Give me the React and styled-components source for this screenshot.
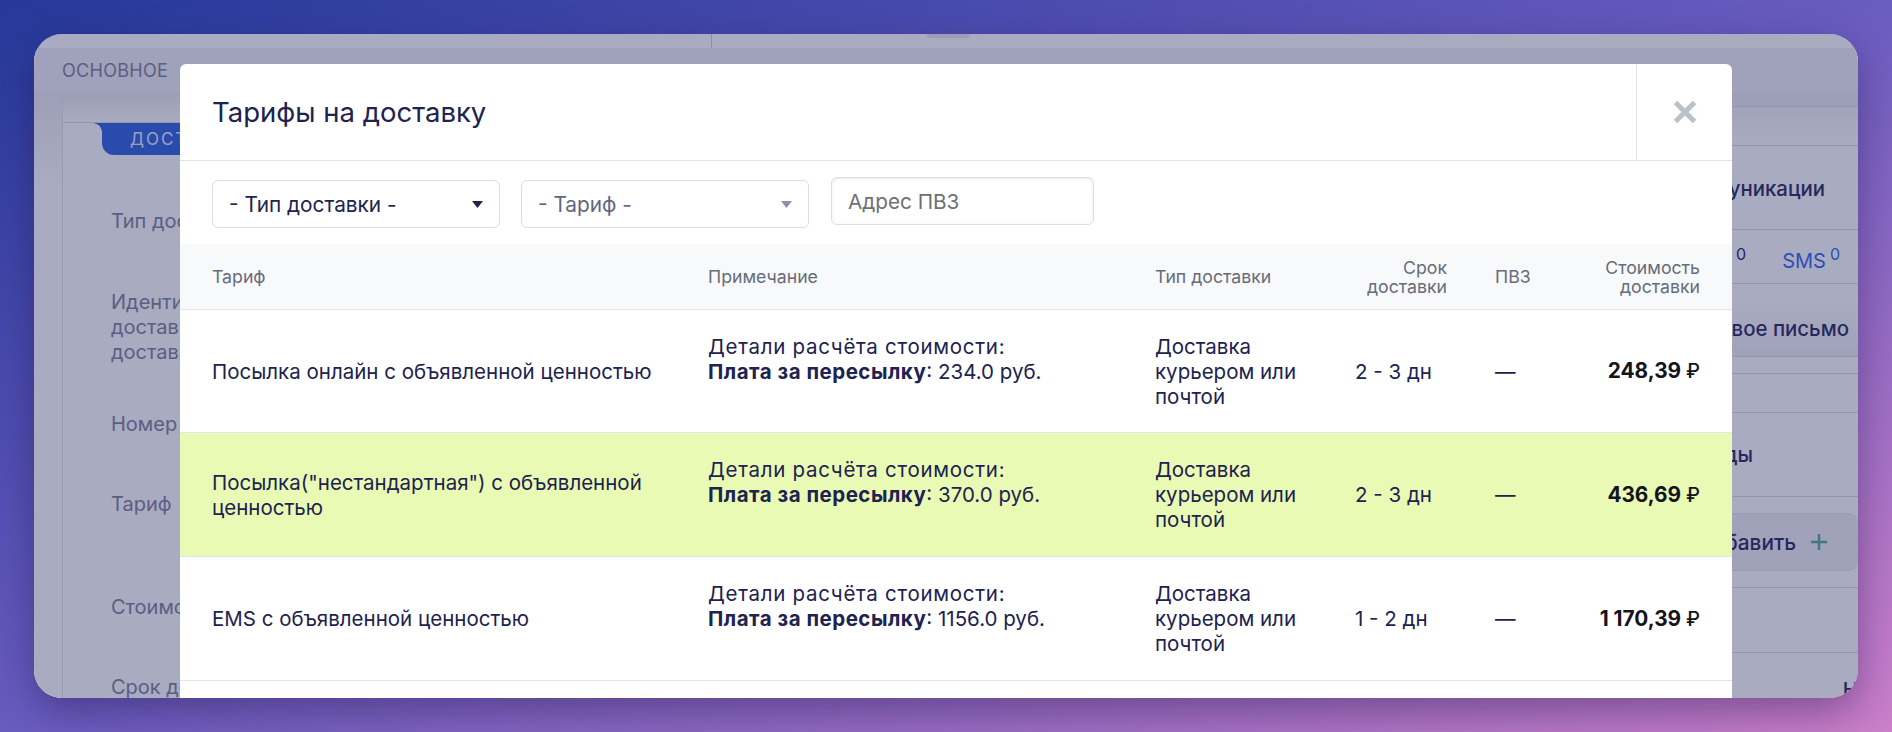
import React from "react";
import styled, { createGlobalStyle } from "styled-components";

const Global = createGlobalStyle`
  html, body { margin: 0; padding: 0; height: 100%; }
  body { font-family: Inter, "Noto Sans", sans-serif; color: #20224f; }
  * { box-sizing: border-box; }
`;

const Page = styled.div`
  width: 1892px; height: 732px; padding: 34px;
  overflow: hidden;
  background: linear-gradient(to bottom right, #25389a 0%, #6a5cc0 50%, #cc7fca 100%);
`;
const Window = styled.div`
  position: relative; width: 1824px; height: 664px;
  border-radius: 28px; overflow: hidden; background: #fff;
  display: flex; flex-direction: column;
`;
const WindowShadow = styled.div`
  border-radius: 28px;
  box-shadow: 0 14px 40px rgba(30, 20, 70, .42);
`;
const TopStrip = styled.div`
  height: 14px; flex: none; position: relative; padding-left: 677px;
  display: flex; align-items: flex-start; gap: 215px;
`;
const StripDivider = styled.div`width: 1px; height: 14px; background: #cfd0dc;`;
const StripTab = styled.div`width: 43px; height: 4px; background: #e6e6ee; border-radius: 0 0 5px 5px;`;
const TabBar = styled.div`
  height: 45px; flex: none; background: #f1f0f7;
  display: flex; align-items: center; padding-left: 28px;
`;
const TabLabel = styled.span`
  font-size: 18px; letter-spacing: .3px; color: #7d8098; text-transform: uppercase;
`;
const Body = styled.div`flex: 1; display: flex; min-height: 0;`;
const Rail = styled.div`
  width: 29px; flex: none; border-right: 1px solid #e4e4ec;
  background: linear-gradient(#ececf2, #fff 90px);
`;
const Form = styled.div`
  flex: 1; min-width: 0; display: flex; flex-direction: column;
`;
const FormHead = styled.div`
  height: 30px; flex: none; border-bottom: 1px solid #dcdce6; background: linear-gradient(#eaeaf0, #fff);
`;
const FormTab = styled.div`
  position: relative; width: 300px; height: 32px; margin-left: 39px; flex: none;
  background: #2b5fe2; color: #e8ecff; border-radius: 0 0 0 12px;
  font-size: 17px; letter-spacing: 2px; line-height: 32px; padding-left: 28px;
  &::before {
    content: ""; position: absolute; left: -9px; top: 0; width: 9px; height: 9px;
    background: radial-gradient(circle at 0 100%, transparent 8.500px, #2b5fe2 9px);
  }
`;
const FormRow = styled.div`
  height: ${p => p.$h}px; flex: none; padding-left: 48px;
  font-size: 20px; line-height: 25px; color: #7b8099; width: 300px;
`;
const FormRows = styled.div`padding-top: 54px; display: flex; flex-direction: column;`;
const Aside = styled.div`width: 300px; flex: none; display: flex; flex-direction: column;`;
const AsideRow = styled.div`
  height: ${p => p.$h}px; flex: none;
  border-bottom: ${p => (p.$line ? "1px solid #dadae4" : "none")};
  background: ${p => (p.$shade ? "linear-gradient(#fff, #f0f0f6)" : "transparent")};
  display: flex; align-items: center; justify-content: flex-end;
  padding-right: ${p => p.$pr || 0}px;
  padding-top: ${p => p.$pt || 0}px;
  font-size: 20.400px; font-weight: 500; color: #25245a; white-space: nowrap;
`;
const DarkStrip = styled(AsideRow)`background: #ebebf0;`;
const FadeRow = styled(AsideRow)`background: linear-gradient(#f4f4f9, #fff);`;
const RuledRow = styled(AsideRow)`border-top: 1px solid #dadae4;`;
const Counter = styled.span`font-size: 20px; font-weight: 400; color: #2f66ee; margin-left: ${p => p.$ml || 0}px;`;
const Sup = styled.sup`font-size: 16px; color: ${p => p.$c || "inherit"}; margin-left: 4px;`;
const AddButton = styled.div`
  height: 58px; margin: 16px 0; flex: none; border: 1px solid #e6e6ee; border-right: 0;
  border-radius: 10px; background: #f0f0f6;
  display: flex; align-items: center; justify-content: flex-end; padding-right: 30px; gap: 14px;
  font-size: 20.800px; font-weight: 500; color: #25245a;
`;
const Overlay = styled.div`
  position: absolute; inset: 0; background: rgba(40, 45, 97, .4);
`;
const Modal = styled.div`
  position: absolute; left: 146px; top: 30px; width: 1552px; height: 700px;
  background: #fff; border-radius: 6px 6px 0 0; display: flex; flex-direction: column;
`;
const ModalHead = styled.div`
  height: 97px; flex: none; display: flex; align-items: stretch; border-bottom: 1px solid #e3e5ec;
`;
const Title = styled.h2`
  flex: 1; margin: 0; padding-left: 32px; display: flex; align-items: center;
  font-size: 27.500px; font-weight: 400; line-height: 1; color: #20224f; padding-top: 1px;
`;
const CloseBox = styled.div`
  width: 96px; flex: none; border-left: 1px solid #e3e5ec;
  display: flex; align-items: center; justify-content: center;
`;
const Filters = styled.div`
  height: 83px; flex: none; display: flex; align-items: flex-start; gap: 21px; padding: 19px 32px 0;
`;
const SelectBox = styled.div`
  width: ${p => p.$w}px; height: 48px; flex: none; border: 1px solid #dcdde3; border-radius: 6px;
  background: #fff; display: flex; align-items: center; justify-content: space-between;
  padding: 0 16px; font-size: 20.800px; color: ${p => (p.$muted ? "#5f6680" : "#20224f")};
`;
const AddressInput = styled.input`
  width: 263px; height: 48px; margin: -3px 0 0 1px; flex: none; border: 1px solid #dcdde3; border-radius: 6px;
  background: #fff; padding: 0 16px; font: 20.700px Inter, sans-serif; color: #20224f; outline: none;
  box-shadow: inset 0 1px 3px rgba(30, 30, 60, .1);
  &::placeholder { color: #6e7074; opacity: 1; }
`;
const columns = "496px 447px 200px 140px 90px 1fr";
const TableHead = styled.div`
  height: 66px; flex: none; display: grid; grid-template-columns: ${columns}; padding: 0 32px;
  align-items: center; background: #f8f9fb; border-bottom: 1px solid #e3e5ec;
  font-size: 17.700px; line-height: 19px; color: #666c7a;
`;
const HeadCell = styled.div`
  text-align: ${p => (p.$right ? "right" : "left")};
  padding-right: ${p => p.$pr || 0}px;
`;
const Row = styled.div`
  height: ${p => p.$h}px; flex: none; display: grid; grid-template-columns: ${columns}; padding: 0 32px;
  align-items: center; border-bottom: 1px solid #e3e5ec;
  background: ${p => (p.$active ? "#e9fab5" : "#fff")};
  font-size: 20.500px; line-height: 25px; color: #20224f;
`;
const Cell = styled.div`padding-right: 24px;`;
const NoteCell = styled(Cell)`height: 75px;`;
const NoteHead = styled.span`letter-spacing: .72px;`;
const NoteLabel = styled.b`font-weight: 700; letter-spacing: .5px;`;
const Price = styled.div`
  text-align: right; font-weight: 700; font-size: 20.800px; color: #14141c; white-space: nowrap;
`;
const Rub = styled.span`font-weight: 500; font-size: 19.500px;`;

const Caret = ({ color }) => (
  <svg width="11" height="7" viewBox="0 0 11 7"><path d="M0 0h11L5.500 7z" fill={color} /></svg>
);
const CloseIcon = () => (
  <svg width="24" height="24" viewBox="0 0 24 24"><path d="M2.500 2.500l19 19M21.500 2.500l-19 19" stroke="#b9c1c9" strokeWidth="5" fill="none" /></svg>
);
const PlusIcon = () => (
  <svg width="18" height="18" viewBox="0 0 18 18"><path d="M9 1v16M1 9h16" stroke="#5aa897" strokeWidth="2.500" fill="none" /></svg>
);

const rows = [
  { name: "Посылка онлайн с объявленной ценностью", fee: "234.0", term: "2 - 3 дн", price: "248,39", h: 123 },
  { name: 'Посылка("нестандартная") с объявленной ценностью', fee: "370.0", term: "2 - 3 дн", price: "436,69", h: 124, active: true },
  { name: "EMS с объявленной ценностью", fee: "1156.0", term: "1 - 2 дн", price: "1 170,39", h: 124 },
];

export default function App() {
  return (
    <Page>
      <Global />
      <WindowShadow>
        <Window>
          <TopStrip><StripDivider /><StripTab /></TopStrip>
          <TabBar><TabLabel>Основное</TabLabel></TabBar>
          <Body>
            <Rail />
            <Form>
              <FormHead />
              <FormTab>ДОСТАВКА</FormTab>
              <FormRows>
                <FormRow $h={81}>Тип доставки</FormRow>
                <FormRow $h={122}>Идентификатор<br />доставки в службе<br />доставки</FormRow>
                <FormRow $h={80}>Номер</FormRow>
                <FormRow $h={103}>Тариф</FormRow>
                <FormRow $h={80}>Стоимость</FormRow>
                <FormRow $h={40}>Срок доставки</FormRow>
              </FormRows>
            </Form>
            <Aside>
              <DarkStrip $h={14} $line />
              <FadeRow $h={39} $line />
              <AsideRow $h={84} $line $pr={33} $pt={2}>Коммуникации</AsideRow>
              <AsideRow $h={54} $line $pr={18} $pt={3}>
                <Counter><Sup $c="#25245a">0</Sup></Counter>
                <Counter $ml={36}>SMS<Sup>0</Sup></Counter>
              </AsideRow>
              <AsideRow $h={16} />
              <AsideRow $h={57} $line $shade $pr={9}>Новое письмо</AsideRow>
              <AsideRow $h={17} $line />
              <AsideRow $h={39} $line />
              <AsideRow $h={84} $line $pr={105}>Коды</AsideRow>
              <AddButton>Добавить <PlusIcon /></AddButton>
              <RuledRow $h={66} $line />
              <AsideRow $h={45} $pt={28}>Н</AsideRow>
            </Aside>
          </Body>
          <Overlay />
          <Modal>
            <ModalHead>
              <Title>Тарифы на доставку</Title>
              <CloseBox><CloseIcon /></CloseBox>
            </ModalHead>
            <Filters>
              <SelectBox $w={288}>- Тип доставки - <Caret color="#20224f" /></SelectBox>
              <SelectBox $w={288} $muted>- Тариф - <Caret color="#8d92a6" /></SelectBox>
              <AddressInput placeholder="Адрес ПВЗ" />
            </Filters>
            <TableHead>
              <HeadCell>Тариф</HeadCell>
              <HeadCell>Примечание</HeadCell>
              <HeadCell>Тип доставки</HeadCell>
              <HeadCell $right $pr={48}>Срок<br />доставки</HeadCell>
              <HeadCell>ПВЗ</HeadCell>
              <HeadCell $right>Стоимость<br />доставки</HeadCell>
            </TableHead>
            {rows.map(r => (
              <Row key={r.price} $h={r.h} $active={r.active}>
                <Cell>{r.name}</Cell>
                <NoteCell><NoteHead>Детали расчёта стоимости:</NoteHead><br /><NoteLabel>Плата за пересылку</NoteLabel>: {r.fee} руб.</NoteCell>
                <Cell>Доставка курьером или почтой</Cell>
                <div>{r.term}</div>
                <div>—</div>
                <Price>{r.price} <Rub>₽</Rub></Price>
              </Row>
            ))}
          </Modal>
        </Window>
      </WindowShadow>
    </Page>
  );
}
